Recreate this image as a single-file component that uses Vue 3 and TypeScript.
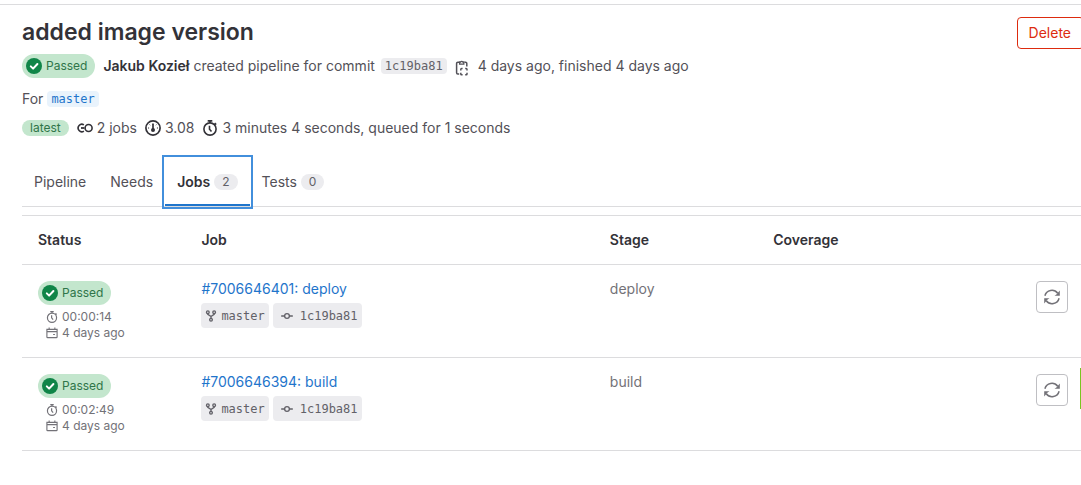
<script setup lang="ts">
import { ref } from 'vue'

interface Tab { name: string; count?: number }
interface Job { id: string; name: string; stage: string; duration: string }

const tabs: Tab[] = [
  { name: 'Pipeline' },
  { name: 'Needs' },
  { name: 'Jobs', count: 2 },
  { name: 'Tests', count: 0 },
]
const activeTab = ref('Jobs')

const jobs: Job[] = [
  { id: '7006646401', name: 'deploy', stage: 'deploy', duration: '00:00:14' },
  { id: '7006646394', name: 'build', stage: 'build', duration: '00:02:49' },
]
</script>

<template>
  <div class="page">
    <svg class="defs" aria-hidden="true">
      <symbol id="i-check" viewBox="0 0 16 16">
        <circle cx="8" cy="8" r="8" fill="#108548" />
        <path d="M4.8 8.4l2.3 2.2 4.3-4.6" fill="none" stroke="#fff" stroke-width="2" stroke-linecap="round" stroke-linejoin="round" />
      </symbol>
      <symbol id="i-copy" viewBox="0 0 16 16">
        <path d="M5 2.2H3.8a1.2 1.2 0 0 0-1.2 1.2v9.4A1.2 1.2 0 0 0 3.8 14h1.4M10.4 2.2h1.2a1.2 1.2 0 0 1 1.2 1.2v3" fill="none" stroke="currentColor" stroke-width="1.5" />
        <path d="M5.6 4.2V2h1a1.2 1.2 0 0 1 2.2 0h1v2.2z" fill="none" stroke="currentColor" stroke-width="1.3" />
        <path d="M6.8 10.6V9.4q0-.8.8-.8h1M11.2 8.6h1q.8 0 .8.8v1.2M13 12.8V14q0 .8-.8.8h-1M8.6 14.8h-1q-.8 0-.8-.8v-1.2" fill="none" stroke="currentColor" stroke-width="1.5" />
      </symbol>
      <symbol id="i-pipeline" viewBox="0 0 16 16">
        <circle cx="11.6" cy="8" r="3.5" fill="none" stroke="currentColor" stroke-width="1.6" />
        <path d="M6.9 4.9A3.7 3.7 0 1 0 6.9 11.1" fill="none" stroke="currentColor" stroke-width="1.6" />
        <path d="M4 8h3.4" fill="none" stroke="currentColor" stroke-width="1.8" />
      </symbol>
      <symbol id="i-gauge" viewBox="0 0 16 16">
        <circle cx="8" cy="8" r="7.1" fill="none" stroke="currentColor" stroke-width="1.7" />
        <path d="M8 4.2V9" fill="none" stroke="currentColor" stroke-width="1.7" stroke-linecap="round" />
        <circle cx="8" cy="10" r="2" fill="currentColor" />
        <path d="M3 8h1.1M11.9 8H13M4.6 4.6l.6.6M11.4 4.6l-.6.6" fill="none" stroke="currentColor" stroke-width="1" />
      </symbol>
      <symbol id="i-timer" viewBox="0 0 16 16">
        <circle cx="8" cy="9" r="6.1" fill="none" stroke="currentColor" stroke-width="1.6" />
        <path d="M5.7.9h4.6M8 1v2M12.6 3.1l1.6 1.5M7.5 5.8v3.4l2 2.3" fill="none" stroke="currentColor" stroke-width="1.6" />
      </symbol>
      <symbol id="i-calendar" viewBox="0 0 16 16">
        <path d="M1.2 3.2h13.6v10a1 1 0 0 1-1 1H2.2a1 1 0 0 1-1-1zM1.2 6.2h13.6M4.2.8v2.8M11.8.8v2.8M9.5 10h2.4" fill="none" stroke="currentColor" stroke-width="1.5" />
      </symbol>
      <symbol id="i-fork" viewBox="0 0 16 16">
        <g fill="none" stroke="currentColor" stroke-width="1.8">
          <circle cx="3.8" cy="3" r="1.8" /><circle cx="12.2" cy="3" r="1.8" /><circle cx="8" cy="13" r="1.8" />
          <path d="M3.8 4.8v.9L8 8.6l4.2-2.9v-.9M8 8.4v2.8" />
        </g>
      </symbol>
      <symbol id="i-commit" viewBox="0 0 16 16">
        <circle cx="8" cy="8" r="3.2" fill="none" stroke="currentColor" stroke-width="1.7" />
        <path d="M.8 8h4M11.2 8h4" stroke="currentColor" stroke-width="1.7" stroke-linecap="round" />
      </symbol>
      <symbol id="i-retry" viewBox="0 0 16 16">
        <path d="M.9 6.7A7.2 7.2 0 0 1 13.7 4.3M15.1 9.3A7.2 7.2 0 0 1 2.3 11.7" fill="none" stroke="currentColor" stroke-width="1.5" />
        <path d="M15.8 1.4v5.3h-5.3l1.9-1.3 1.5-1.6zM.2 14.6V9.3h5.3l-1.9 1.3-1.5 1.6z" fill="currentColor" />
      </symbol>
    </svg>

    <main class="content">
      <header class="top">
        <div class="summary">
          <h1>added image version</h1>
          <div class="line created">
            <span class="status"><svg class="s16"><use href="#i-check" /></svg>Passed</span>
            <span><a class="author" href="#">Jakub Kozieł</a> created pipeline for commit</span>
            <a class="sha" href="#">1c19ba81</a>
            <button class="copy" type="button" aria-label="Copy commit SHA"><svg class="s16"><use href="#i-copy" /></svg></button>
            <span>4 days ago, finished 4 days ago</span>
          </div>
          <div class="line branch">For <a class="sha ref" href="#">master</a></div>
          <div class="line stats">
            <span class="latest">latest</span>
            <span class="stat"><svg class="s16"><use href="#i-pipeline" /></svg>2 jobs</span>
            <span class="stat"><svg class="s16"><use href="#i-gauge" /></svg>3.08</span>
            <span class="stat"><svg class="s16"><use href="#i-timer" /></svg>3 minutes 4 seconds, queued for 1 seconds</span>
          </div>
        </div>
        <button class="delete" type="button">Delete</button>
      </header>

      <nav class="tabs" role="tablist">
        <button
          v-for="tab in tabs"
          :key="tab.name"
          class="tab"
          :class="{ active: tab.name === activeTab }"
          type="button"
          role="tab"
          :aria-selected="tab.name === activeTab"
          @click="activeTab = tab.name"
        >
          {{ tab.name }}<span v-if="tab.count !== undefined" class="count">{{ tab.count }}</span>
        </button>
      </nav>

      <table>
        <colgroup><col class="c2"><col class="c5"><col class="c2"><col class="c2"><col class="c2"></colgroup>
        <thead>
          <tr><th>Status</th><th>Job</th><th>Stage</th><th>Coverage</th><th></th></tr>
        </thead>
        <tbody>
          <tr v-for="job in jobs" :key="job.id">
            <td>
              <span class="status"><svg class="s16"><use href="#i-check" /></svg>Passed</span>
              <div class="times">
                <div class="time"><svg class="s12"><use href="#i-timer" /></svg>{{ job.duration }}</div>
                <div class="time"><svg class="s12"><use href="#i-calendar" /></svg>4 days ago</div>
              </div>
            </td>
            <td>
              <a class="job" href="#">#{{ job.id }}: {{ job.name }}</a>
              <div class="chips">
                <a class="chip" href="#"><svg class="s12"><use href="#i-fork" /></svg>master</a>
                <a class="chip commit" href="#"><svg class="s12"><use href="#i-commit" /></svg>1c19ba81</a>
              </div>
            </td>
            <td class="stage">{{ job.stage }}</td>
            <td></td>
            <td class="actions">
              <button class="retry" type="button" aria-label="Run again"><svg class="s16"><use href="#i-retry" /></svg></button>
            </td>
          </tr>
        </tbody>
      </table>
    </main>
    <span class="edge"></span>
  </div>
</template>

<style>
body { background: #fff; }
</style>

<style scoped>
.page {
  position: relative;
  overflow: hidden;
  margin-top: 4px;
  border-top: 1px solid #dcdcde;
  font: 14px/20px Inter, "Noto Sans", sans-serif;
  color: #535158;
}
.defs { position: absolute; width: 0; height: 0; }
a { color: inherit; text-decoration: none; }
button { font: inherit; color: inherit; cursor: pointer; }
svg { flex: none; display: block; }
.s16 { width: 16px; height: 16px; }
.s12 { width: 12px; height: 12px; }

.content { margin: 0 -3px 0 22px; padding-bottom: 34px; }
.top { display: flex; justify-content: space-between; align-items: flex-start; padding-top: 12px; }
h1 { margin: 0; font-size: 23px; line-height: 30px; font-weight: 600; color: #333238; }
.line { display: flex; align-items: center; white-space: nowrap; }
.created { margin-top: 2px; height: 34px; }
.branch { height: 32px; gap: 4px; }
.stats { height: 26px; gap: 8px; }
.author { font-weight: 600; color: #333238; }
.created .status { margin-right: 8px; }
.status {
  display: inline-flex; align-items: center; gap: 4px;
  height: 24px; padding: 0 8px 0 4px; box-sizing: border-box;
  border-radius: 12px; background: #c3e6cd; color: #2f7549;
  font-size: 12px; line-height: 16px; vertical-align: top;
}
.sha {
  margin-left: 6px; padding: 0 4px; border-radius: 4px;
  background: #ececef; color: #626168;
  font: 12px/16px "DejaVu Sans Mono", monospace;
}
.ref { margin-left: 0; background: #e9f3fc; color: #1f75cb; }
.copy { display: flex; margin: 4px 8px 0 7px; padding: 0; border: 0; background: none; color: #535158; }
.latest { padding: 0 8px; border-radius: 8px; background: #c3e6cd; color: #2f7549; font-size: 12px; line-height: 16px; }
.stat { display: flex; align-items: center; gap: 4px; }
.stat svg { color: #333238; }
.delete {
  padding: 5px 12px 5px 11px; border: 1px solid #dd2b0e; border-radius: 4px;
  background: #fff; color: #dd2b0e;
}

.tabs { display: flex; height: 48px; margin-top: 17px; border-bottom: 1px solid #dcdcde; }
.tab { display: flex; align-items: center; gap: 4px; height: 48px; padding: 0 12px; border: 0; background: none; white-space: nowrap; }
.tab.active {
  box-shadow: inset 0 -2px #1f75cb;
  outline: 2px solid #428fdc; outline-offset: 1px;
  font-weight: 600; color: #333238;
}
.count { padding: 0 8px; border-radius: 8px; background: #ececef; color: #626168; font-size: 12px; line-height: 16px; font-weight: 400; }

table { width: 100%; margin-top: 8px; border-collapse: separate; border-spacing: 0; table-layout: fixed; border-top: 1px solid #dcdcde; }
.c2 { width: 15.385%; }
.c5 { width: 38.46%; }
th, td { padding: 16px; text-align: left; vertical-align: top; border-bottom: 1px solid #dcdcde; }
th { line-height: 16px; font-weight: 600; color: #333238; }
td { line-height: 16px; }
.times { margin: 4px 0 0 8px; color: #737278; font-size: 12px; }
.time { display: flex; align-items: center; gap: 4px; }
.job { display: block; color: #1f75cb; }
.chips { display: flex; gap: 4px; margin-top: 6px; }
.chip {
  display: flex; align-items: center; gap: 4px; height: 25px; padding: 0 4px;
  border-radius: 4px; background: #ececef; color: #626168;
  font: 12px/16px "DejaVu Sans Mono", monospace;
}
.commit { gap: 7px; padding-left: 8px; }
.stage { color: #737278; }
.actions { text-align: right; }
.retry {
  display: inline-flex; align-items: center; justify-content: center;
  width: 32px; height: 32px; padding: 0; border: 1px solid #bfbfc3; border-radius: 4px;
  background: #fff; color: #737278; vertical-align: top;
}
/* Collapsed side panel handle peeking in from the right */
.edge { position: absolute; right: 0; top: 363px; width: 1px; height: 41px; background: #7ac51f; }
</style>
